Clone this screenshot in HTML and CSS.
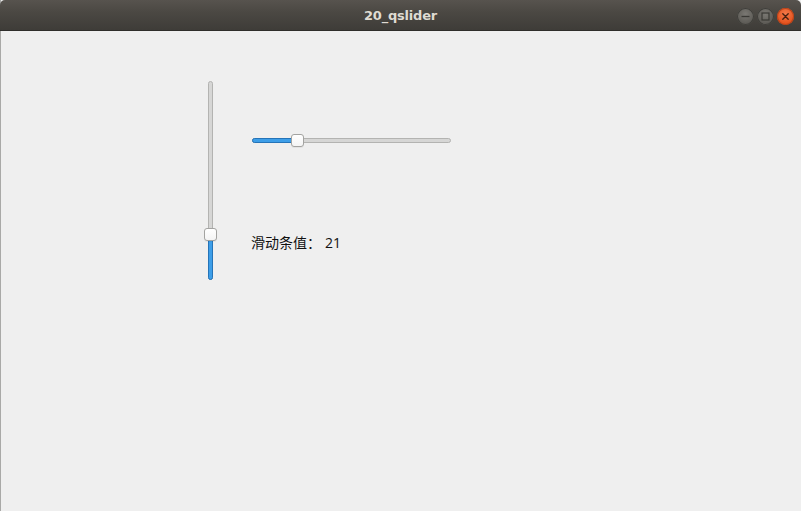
FILE: index.html
```html
<!DOCTYPE html>
<html lang="zh">
<head>
<meta charset="utf-8">
<title>20_qslider</title>
<link rel="stylesheet" href="styles.css">
</head>
<body>
<div class="window">
  <header class="titlebar">
    <span class="title">20_qslider</span>
    <div class="controls">
      <span class="btn btn-min"><svg width="17" height="17" viewBox="0 0 17 17"><line x1="4.5" y1="8.5" x2="12.5" y2="8.5" stroke="#3a3935" stroke-width="1.3"/></svg></span>
      <span class="btn btn-max"><svg width="17" height="17" viewBox="0 0 17 17"><rect x="5" y="5" width="7" height="7" fill="none" stroke="#3a3935" stroke-width="1.2"/></svg></span>
      <span class="btn btn-close"><svg width="17" height="17" viewBox="0 0 17 17"><path d="M5.8 5.8 L11.2 11.2 M11.2 5.8 L5.8 11.2" stroke="#4a2010" stroke-width="1.4" stroke-linecap="round"/></svg></span>
    </div>
  </header>
  <main class="content">
    <div class="vslider">
      <div class="vgroove"></div>
      <div class="vfill"></div>
      <div class="handle vhandle"></div>
    </div>
    <div class="side">
      <div class="hslider">
        <div class="hgroove"></div>
        <div class="hfill"></div>
        <div class="handle hhandle"></div>
      </div>
      <div class="label">滑动条值：<span class="value">21</span></div>
    </div>
  </main>
</div>
</body>
</html>
```
FILE: styles.css
```css
* { box-sizing: border-box; }
html, body { margin: 0; padding: 0; }
body { width: 801px; height: 511px; overflow: hidden; background: #efefef; }
.window {
  width: 801px; height: 511px;
  display: flex; flex-direction: column;
  background: #efefef;
  border-left: 1px solid #a9a9a7;
}
.titlebar {
  height: 31px; flex: none;
  position: relative;
  display: flex; align-items: center; justify-content: center;
  background: linear-gradient(#57534e 0%, #4b4843 40%, #3e3c38 100%);
  border-radius: 5px 5px 0 0;
  margin-left: -1px;
  border-bottom: 1px solid #2f2e2b;
}
.title {
  font-family: "DejaVu Sans", sans-serif;
  font-weight: bold;
  font-size: 13px;
  color: #dfdbd2;
  letter-spacing: -0.2px;
  margin-top: 1px;
}
.controls {
  position: absolute; right: 7px; top: 8px;
  display: flex; gap: 3px;
}
.btn {
  width: 17px; height: 17px; border-radius: 50%;
  display: flex; align-items: center; justify-content: center;
}
.btn svg { display: block; }
.btn-min, .btn-max {
  background: radial-gradient(circle at 50% 35%, #7a7873, #5c5a55 70%);
  box-shadow: inset 0 0 0 1px #3f3e3a;
}
.btn-close {
  background: radial-gradient(circle at 50% 35%, #f47a4a, #e4511c 70%);
  box-shadow: inset 0 0 0 1px #b8431a;
}
.content {
  flex: 1;
  display: flex;
  padding: 50px 0 0 202px;
}
.vslider {
  position: relative;
  width: 13px; height: 199px;
}
.vgroove {
  position: absolute; left: 5px; top: 0; bottom: 0; width: 5px;
  background: #d6d6d5;
  border: 1px solid #b3b3b1;
  border-radius: 3px;
}
.vfill {
  position: absolute; left: 5px; width: 5px; bottom: 0; height: 48px;
  background: #3d9ee8;
  border: 1px solid #2574b8;
  border-radius: 0 0 3px 3px;
}
.handle {
  position: absolute;
  width: 13px; height: 13px;
  background: linear-gradient(#ffffff, #f4f4f4);
  border: 1px solid #a3a3a1;
  border-radius: 3px;
  box-shadow: 0 1px 0 rgba(0,0,0,0.05);
}
.vhandle { left: 1px; top: 147px; }
.side {
  display: flex; flex-direction: column;
  margin-left: 35px;
}
.hslider {
  position: relative;
  width: 199px; height: 13px;
  margin-top: 53px;
  margin-left: 1px;
}
.hgroove {
  position: absolute; top: 4px; left: 0; right: 0; height: 5px;
  background: #d6d6d5;
  border: 1px solid #b3b3b1;
  border-radius: 3px;
}
.hfill {
  position: absolute; left: 0; top: 4px; height: 5px; width: 44px;
  background: #3d9ee8;
  border: 1px solid #2574b8;
  border-radius: 3px 0 0 3px;
}
.hhandle { left: 39px; top: 0; }
.label {
  margin-top: 85px;
  font-family: "Noto Sans CJK SC", "Noto Sans", sans-serif;
  font-size: 14px;
  line-height: 20px;
  color: #111111;
}
.value {
  font-family: "Open Sans", "Noto Sans", sans-serif;
  margin-left: 4px;
}
```
